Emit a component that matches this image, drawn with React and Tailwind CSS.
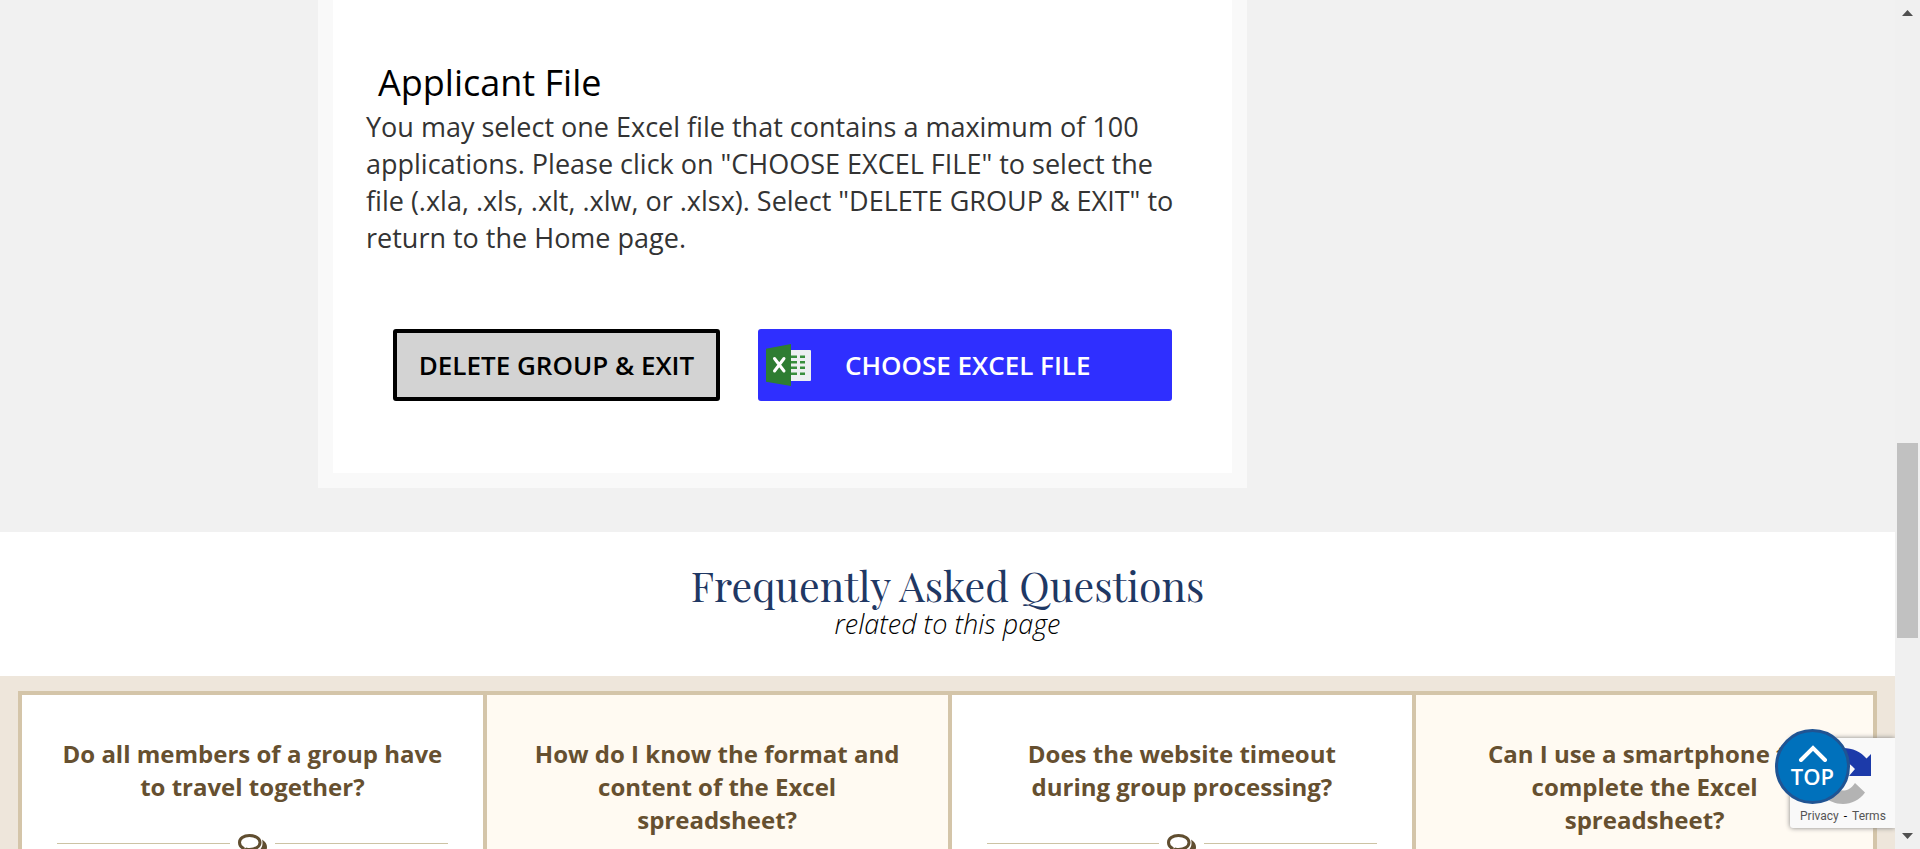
const questions = [
  "Do all members of a group have to travel together?",
  "How do I know the format and content of the Excel spreadsheet?",
  "Does the website timeout during group processing?",
  "Can I use a smartphone to complete the Excel spreadsheet?",
];

function ExcelIcon() {
  return (
    <svg width="45" height="42" viewBox="0 0 45 42" aria-hidden="true">
      <rect x="22" y="6" width="23" height="31" rx="1" fill="#eceff1" />
      <g fill="#388e3c">
        <path d="M25 11.500h6v2.500h-6zM25 17h6v2.500h-6zM25 22.500h6v2.500h-6zM25 28.500h6v2.500h-6zM34 11.500h5v2.500h-5zM34 17h5v2.500h-5zM34 22.500h5v2.500h-5zM34 28.500h5v2.500h-5z" />
      </g>
      <path d="M25 0 0 4.800v33L25 42z" fill="#2e7d32" />
      <path d="M8.500 14.500 18 27M18 14.500 8.500 27" stroke="#fff" strokeWidth="3" strokeLinecap="round" fill="none" />
    </svg>
  );
}

function CommentsIcon() {
  return (
    <svg width="29" height="26" viewBox="0 0 29 26" className="shrink-0" aria-hidden="true">
      <path d="M24 5.500C27.500 7.500 29 10.500 29 13c0 2.500-1 4.500-3 6 .5 2 1.500 3 3 4.500-2.500 0-5-1-6.500-2.500-4 .7-8 0-10.500-2 8 .2 12.500-4.500 12.500-9.500 0-1.500 0-2.500-.5-4z" fill="#604e30" />
      <path d="M11.500 1.500C5.500 1.500 1.500 4.700 1.500 8.500c0 2.300 1.300 4.300 3.500 5.600-.2 1.200-.8 2.200-1.500 3 2-.2 3.500-.8 5-2 1 .3 2 .4 3 .4 6 0 10.500-3 10.500-7s-4.500-7-10.500-7z" fill="none" stroke="#604e30" strokeWidth="3" />
    </svg>
  );
}

function Divider() {
  return (
    <div className="mt-[30px] flex items-start">
      <span className="mt-[10px] h-px flex-1 bg-[#ccc3a4]" />
      <span className="mx-[8px] mt-px"><CommentsIcon /></span>
      <span className="mt-[10px] h-px flex-1 bg-[#ccc3a4]" />
    </div>
  );
}

function Recaptcha() {
  return (
    <aside className="absolute right-0 bottom-[21px] flex h-[90px] w-[105px] flex-col justify-between rounded-l-[3px] bg-[#f9f9f9] pt-[8px] pb-[4px] shadow-[0_0_5px_#808080]">
      <svg width="60" height="60" viewBox="0 0 60 60" className="ml-[23px]" aria-hidden="true">
        <path d="M30 2v14c4 0 7 2 9.500 4.500L42 23l-6 7h22V8l-4.500 4.500C48 6 39.500 2 30 2z" fill="#1c3aa9" />
        <path d="M30 2C20.500 2 12 6 6.500 13L15 22c3-4 8-6 15-6z" fill="#4285f4" />
        <path d="M2 30c0 15.500 12.500 28 28 28 8.500 0 16.500-4 22-11.500L42 37c-4 6-8 7.500-12 7.500-6 0-11-3.500-13-8.500l5-6z" fill="#b3b3b3" />
      </svg>
      <p className="pl-[10px] text-[12px] leading-[16px] text-[#555] font-[Roboto,sans-serif]">
        <a href="#privacy">Privacy</a>
        <span className="mx-[5px] text-black">-</span>
        <a href="#terms">Terms</a>
      </p>
    </aside>
  );
}

function Scrollbar() {
  return (
    <div className="flex w-[25px] shrink-0 flex-col items-center bg-[#f0f0f0] py-[10px]" aria-hidden="true">
      <svg width="11" height="6" viewBox="0 0 11 6"><path d="M5.500 0 11 6H0z" fill="#505050" /></svg>
      <span className="mt-[427px] h-[195px] w-[21px] bg-[#c1c1c1]" />
      <svg width="11" height="6" viewBox="0 0 11 6" className="mt-auto"><path d="M5.500 6 11 0H0z" fill="#505050" /></svg>
    </div>
  );
}

export default function App() {
  return (
    <div className="flex h-screen overflow-hidden bg-white font-['Open_Sans',sans-serif]">
      <div className="relative min-w-0 flex-1 overflow-hidden">
        <main>
          <section className="bg-[#f1f1f1] pb-[44px] pl-[318px]">
            <div className="w-full max-w-[929px] border-x-[15px] border-b-[15px] border-[#f9f9f9] bg-white px-[33px] pt-[58px] pb-[72px]">
              <h1 className="pl-[12px] text-[36px] leading-[50px] text-black">Applicant File</h1>
              <p className="pr-[16px] text-[27px] leading-[37px] text-[#333]">
                You may select one Excel file that contains a maximum of 100 applications. Please click on "CHOOSE
                EXCEL FILE" to select the file (.xla, .xls, .xlt, .xlw, or .xlsx). Select "DELETE GROUP &amp; EXIT" to
                return to the Home page.
              </p>
              <div className="mt-[73px] flex gap-[38px] px-[27px] text-[26px] font-semibold">
                <button type="button" className="h-[72px] w-[327px] shrink-0 rounded-[3px] border-4 border-black bg-[#d3d3d3] whitespace-nowrap text-black">
                  DELETE GROUP &amp; EXIT
                </button>
                <button type="button" className="flex h-[72px] flex-1 items-center gap-[34px] rounded-[3px] bg-[#2f2fff] pl-[8px] whitespace-nowrap text-white">
                  <ExcelIcon />
                  CHOOSE EXCEL FILE
                </button>
              </div>
            </div>
          </section>
          <header className="flex flex-col items-center pt-[30px] pb-[36px] text-center">
            <h2 className="text-[41px] leading-[46px] text-[#1f3864] font-['Playfair_Display','Liberation_Serif',serif]">
              Frequently Asked Questions
            </h2>
            <p className="text-[27px] leading-[32px] font-light text-black italic">related to this page</p>
          </header>
          <section className="bg-[#eee6db] px-[18px] pt-[15px]">
            <div className="grid grid-cols-4 border-t-4 border-[#d4c5a9]">
              {questions.map((question) => (
                <article key={question} className="border-l-4 border-[#d4c5a9] bg-white px-[35px] pt-[42px] pb-[60px] last:border-r-4 even:bg-[#fffaf2]">
                  <h3 className="text-center text-[24px] leading-[33px] font-bold text-[#665030]">{question}</h3>
                  <Divider />
                </article>
              ))}
            </div>
          </section>
        </main>
        <Recaptcha />
        <a href="#top" className="absolute right-[45px] bottom-[45px] flex size-[75px] flex-col items-center rounded-full border-[3px] border-[#205493] bg-[#0071bc] pt-[13px] text-white">
          <svg width="30" height="17" viewBox="0 0 30 17" aria-hidden="true">
            <path d="M3 15 15 3l12 12" fill="none" stroke="#fff" strokeWidth="4" strokeLinecap="round" />
          </svg>
          <span className="text-[22px] leading-[28px] font-semibold">TOP</span>
        </a>
      </div>
      <Scrollbar />
    </div>
  );
}
